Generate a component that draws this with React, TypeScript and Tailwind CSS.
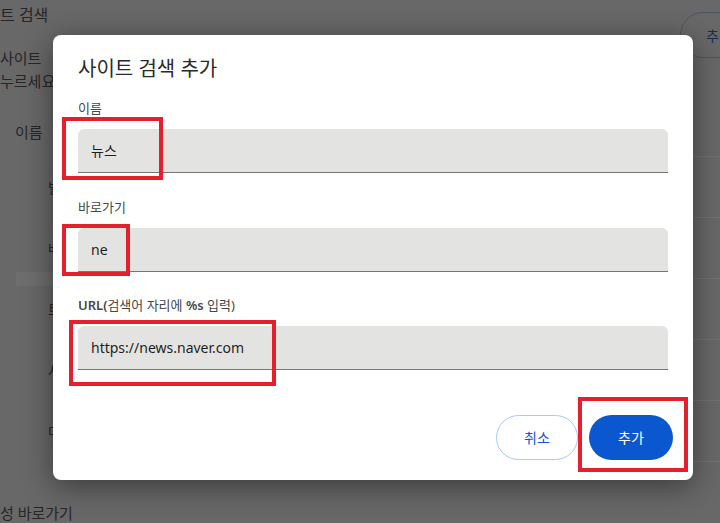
import React from 'react';

const FONT = { fontFamily: '"Noto Sans", "Noto Sans CJK KR", sans-serif' };

function Field({ label, value, className = '' }: { label: React.ReactNode; value: string; className?: string }) {
  return (
    <div className={`flex flex-col ${className}`}>
      <div className="text-[13px] leading-5 text-[#474747]">{label}</div>
      <div className="mt-[11px] h-[44px] rounded-t-[6px] bg-[#e3e4e2] border-b border-[#747775] flex items-center pl-[13px] text-[14px] text-[#1f1f1f]">
        {value}
      </div>
    </div>
  );
}

function Mark({ className }: { className: string }) {
  return <div className={`absolute border-[4px] border-[#e3202b] ${className}`} />;
}

export default function App() {
  const rows = ['빌', '배', '트', '사', '다'];

  return (
    <div className="relative w-[720px] h-[523px] overflow-hidden bg-[#686868] text-[#262626]" style={FONT}>
      {/* 뒤쪽 설정 페이지 (어둡게 가려짐) */}
      <div className="flex flex-col">
        <div className="flex items-start justify-between h-[47px] pt-[4px]">
          <div className="text-[16px] leading-[22px]">트 검색</div>
          <div className="mt-[8px] -mr-[20px] h-[46px] w-[60px] rounded-full border border-[#4c5566] pl-[25px] flex items-center text-[14px] text-[#1c2c4c]">
            추
          </div>
        </div>
        <div className="text-[15px] leading-[23px]">사이트</div>
        <div className="text-[15px] leading-[23px]">누르세요</div>
        <div className="pl-[15px] pt-[28px] text-[15px] leading-[22px] h-[63px]">이름</div>
        <div className="ml-[56px] h-px bg-[#737373]" />
        <div className="flex flex-col">
          {rows.map((r, i) => (
            <div key={r} className="relative flex flex-col">
              <div className="h-[60px] flex items-center pl-[48px] text-[14px]">{r}</div>
              <div className="ml-[56px] h-px bg-[#737373]" />
              {i === 1 && <div className="absolute left-[16px] w-[50px] bottom-[-7px] h-[14px] bg-[#6e6e6e]" />}
            </div>
          ))}
        </div>
        <div className="pt-[40px] text-[15px] leading-[22px]">성 바로가기</div>
      </div>

      {/* 다이얼로그 */}
      <div className="absolute left-[53px] top-[35px] w-[640px] h-[445px] bg-white rounded-[8px] shadow-[0_6px_30px_rgba(0,0,0,0.45)] px-[25px] pt-[20px]">
        <div className="text-[20px] leading-[28px] text-[#2a2a2a]">사이트 검색 추가</div>
        <div className="mt-[15px] flex flex-col">
          <Field label="이름" value="뉴스" />
          <Field label="바로가기" value="ne" className="mt-[24px]" />
          <Field
            className="mt-[23px]"
            label={
              <>
                <span className="font-semibold">URL(</span>검색어 자리에 <span className="font-semibold">%s</span> 입력)
              </>
            }
            value="https://news.naver.com"
          />
        </div>
        <div className="mt-[45px] -mr-[5px] flex justify-end gap-[11px]">
          <button className="h-[45px] w-[82px] rounded-full border border-[#a8c7fa] text-[14px] text-[#0b57d0]">취소</button>
          <button className="h-[45px] w-[84px] rounded-full bg-[#0b57d0] text-[14px] text-white">추가</button>
        </div>

        <Mark className="left-[9px] top-[82px] w-[101px] h-[63px]" />
        <Mark className="left-[9px] top-[189px] w-[68px] h-[52px]" />
        <Mark className="left-[16px] top-[285px] w-[207px] h-[66px]" />
        <Mark className="left-[525px] top-[362px] w-[110px] h-[75px]" />
      </div>
    </div>
  );
}
